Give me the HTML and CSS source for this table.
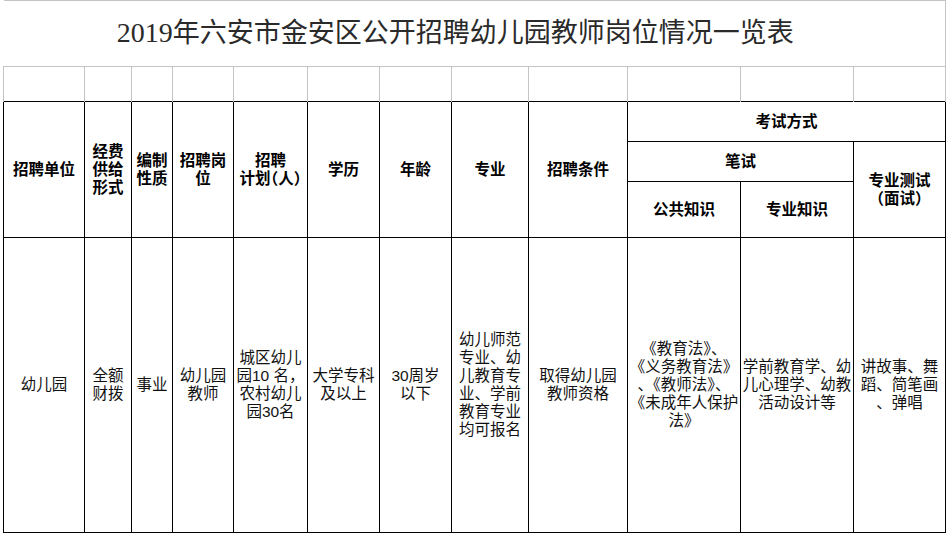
FILE: index.html
```html
<!DOCTYPE html>
<html lang="zh-CN">
<head>
<meta charset="utf-8">
<title>2019年六安市金安区公开招聘幼儿园教师岗位情况一览表</title>
<link rel="stylesheet" href="styles.css">
</head>
<body>
<table class="sheet">
  <colgroup>
    <col class="w81"><col class="w47"><col class="w41"><col class="w61"><col class="w74"><col class="w72">
    <col class="w72"><col class="w77"><col class="w99"><col class="w113"><col class="w113"><col class="w92">
  </colgroup>
  <tr class="r-title">
    <td colspan="12" class="title"><span class="num">2019</span>年六安市金安区公开招聘幼儿园教师岗位情况一览表</td>
  </tr>
  <tr class="r-grid">
    <td></td><td></td><td></td><td></td><td></td><td></td><td></td><td></td><td></td><td></td><td></td><td></td>
  </tr>
  <tr class="r-h1">
    <th rowspan="3">招聘单位</th>
    <th rowspan="3">经费<br>供给<br>形式</th>
    <th rowspan="3">编制<br>性质</th>
    <th rowspan="3">招聘岗<br>位</th>
    <th rowspan="3">招聘<br><span class="halt">计划（人）</span></th>
    <th rowspan="3">学历</th>
    <th rowspan="3">年龄</th>
    <th rowspan="3">专业</th>
    <th rowspan="3">招聘条件</th>
    <th colspan="3">考试方式</th>
  </tr>
  <tr class="r-h2">
    <th colspan="2">笔试</th>
    <th rowspan="2">专业测试<br><span class="halt">（面试）</span></th>
  </tr>
  <tr class="r-h3">
    <th>公共知识</th>
    <th>专业知识</th>
  </tr>
  <tr class="r-body">
    <td>幼儿园</td>
    <td>全额<br>财拨</td>
    <td>事业</td>
    <td>幼儿园<br>教师</td>
    <td>城区幼儿<br>园10 名，<br>农村幼儿<br>园30名</td>
    <td>大学专科<br>及以上</td>
    <td>30周岁<br>以下</td>
    <td>幼儿师范<br>专业、幼<br>儿教育专<br>业、学前<br>教育专业<br>均可报名</td>
    <td>取得幼儿园<br>教师资格</td>
    <td>《教育法》、<br>《义务教育法》<br>、《教师法》、<br>《未成年人保护<br>法》</td>
    <td>学前教育学、幼<br>儿心理学、幼教<br>活动设计等</td>
    <td>讲故事、舞<br>蹈、简笔画<br>、弹唱</td>
  </tr>
</table>
</body>
</html>
```

FILE: styles.css
```css
html, body {
  margin: 0;
  padding: 0;
  background: #ffffff;
}

body {
  font-family: "Liberation Sans", "Noto Sans CJK SC", sans-serif;
  color: #111111;
}

.sheet {
  border-collapse: collapse;
  table-layout: fixed;
  width: 943px;
  margin-left: 3px;
}

.w81 { width: 81px; }
.w47 { width: 47px; }
.w41 { width: 41px; }
.w61 { width: 61px; }
.w74 { width: 74px; }
.w72 { width: 72px; }
.w77 { width: 77px; }
.w99 { width: 99px; }
.w113 { width: 113px; }
.w92 { width: 92px; }

.sheet td,
.sheet th {
  padding: 0 1px;
  text-align: center;
  vertical-align: middle;
  font-size: 15px;
  line-height: 18px;
  white-space: nowrap;
}

.r-title { height: 66px; }
.r-grid { height: 35px; }
.r-h1 { height: 40px; }
.r-h2 { height: 40px; }
.r-h3 { height: 56px; }
.r-body { height: 295px; }

.sheet .title {
  border-top: 1px solid #c4c4c4;
  border-right: 1px solid #c4c4c4;
  border-bottom: 1px solid #c4c4c4;
  font-family: "Liberation Serif", "Noto Sans CJK SC", serif;
  font-size: 27px;
  line-height: 32px;
  font-weight: 400;
  color: #2a2a2a;
  padding: 0 38px 2px 0;
}

.sheet .title .num {
  font-family: "Liberation Serif", serif;
  font-size: 28px;
}

.r-grid td {
  border-left: 1px solid #c4c4c4;
  border-right: 1px solid #c4c4c4;
}

.sheet th {
  border: 1px solid #000000;
  font-weight: 700;
  font-size: 15.5px;
  color: #000000;
}

.sheet .r-body td {
  border: 1px solid #000000;
  font-weight: 400;
  font-size: 15.5px;
}

.halt {
  font-feature-settings: "halt" 1;
}
```
